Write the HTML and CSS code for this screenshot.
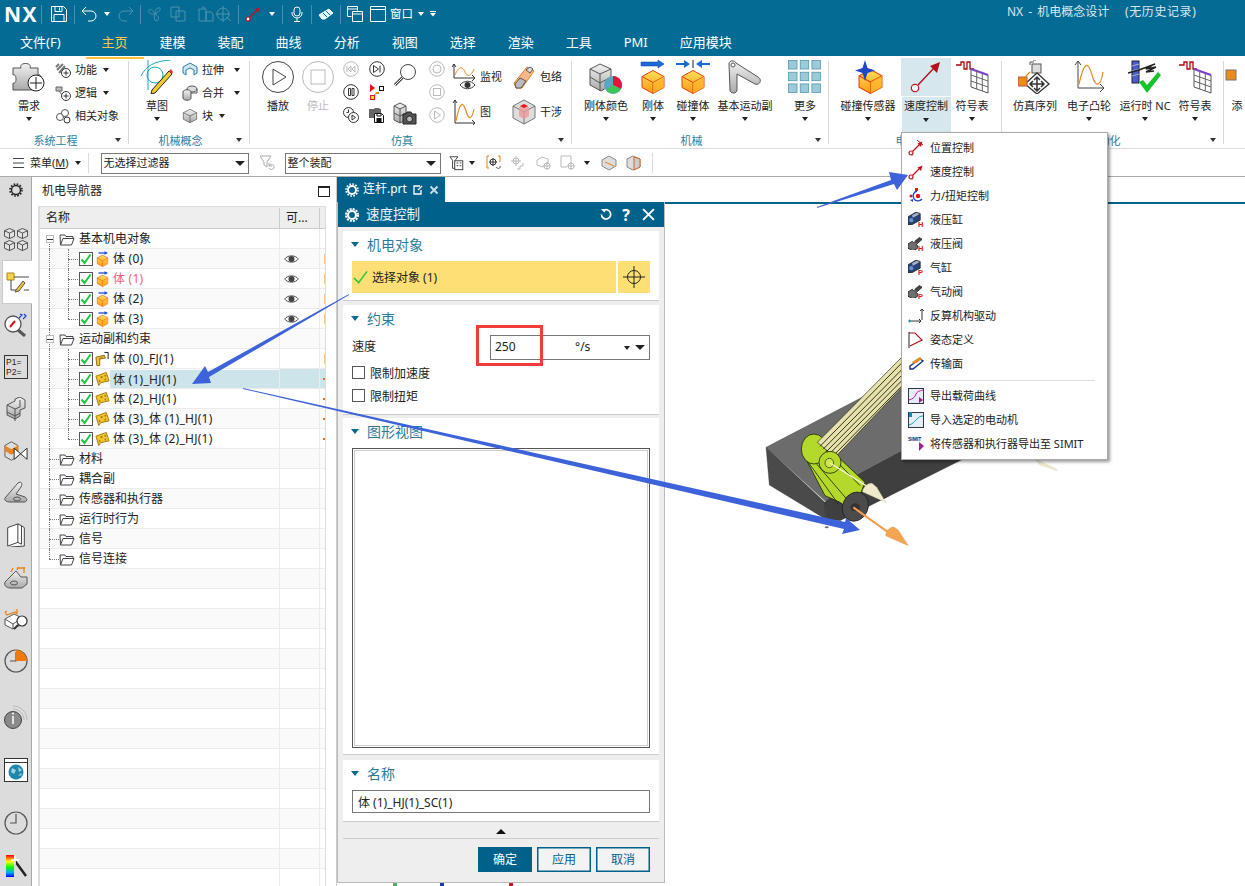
FILE: index.html
```html
<!DOCTYPE html>
<html lang="zh-CN">
<head>
<meta charset="utf-8">
<title>NX - 机电概念设计</title>
<link rel="stylesheet" href="styles.css">
</head>
<body>
<svg class="defs" width="0" height="0" aria-hidden="true">
  <defs>
    <linearGradient id="gOr" x1="0" y1="0" x2="0" y2="1"><stop offset="0" stop-color="#ffe05a"/><stop offset="1" stop-color="#ff9a12"/></linearGradient>
    <linearGradient id="gGr" x1="0" y1="0" x2="0" y2="1"><stop offset="0" stop-color="#f2f2f2"/><stop offset="1" stop-color="#a9a9a9"/></linearGradient>
    <linearGradient id="gBar" x1="0" y1="0" x2="0" y2="1"><stop offset="0" stop-color="#f00"/><stop offset=".3" stop-color="#ff0"/><stop offset=".55" stop-color="#0f0"/><stop offset=".8" stop-color="#0af"/><stop offset="1" stop-color="#00f"/></linearGradient>
    <symbol id="cube" viewBox="0 0 24 24"><path d="M12 1 23 7v11l-11 6L1 18V7z" fill="url(#gOr)" stroke="#e8400c"/><path d="M1 7l11 6 11-6M12 13v11" fill="none" stroke="#e8400c"/><path d="M12 13l11-6v11l-11 6z" fill="#ffb52c" opacity=".7"/></symbol>
    <symbol id="gcube" viewBox="0 0 24 24"><path d="M12 2 22 7v10l-10 5L2 17V7z" fill="url(#gGr)" stroke="#555"/><path d="M2 7l10 5 10-5M12 12v10" fill="none" stroke="#555"/></symbol>
    <symbol id="gcube2" viewBox="0 0 12 12"><path d="M6 .5 11.500 3v6L6 11.500.5 9V3z" fill="#e4e4e4" stroke="#444"/><path d="M.5 3 6 5.500 11.500 3M6 5.500v6" fill="none" stroke="#444"/></symbol>
    <symbol id="folder" viewBox="0 0 16 14"><path d="M1 3h5l1 1.500h7v2M1.500 13 1 3M1.500 13h11L15 6.500H4L1.500 13z" fill="#fff" stroke="#444"/></symbol>
    <symbol id="check" viewBox="0 0 14 14"><rect x=".5" y=".5" width="13" height="13" fill="#fff" stroke="#555"/><path d="M2.500 7.500 5.500 11l6-8.500" fill="none" stroke="#1fc93e" stroke-width="2"/></symbol>
    <symbol id="eye" viewBox="0 0 16 10"><path d="M.7 5C4 .5 12 .5 15.300 5 12 9.500 4 9.500.7 5z" fill="#fff" stroke="#444"/><circle cx="8" cy="5" r="3.200" fill="#444"/></symbol>
    <symbol id="bodyico" viewBox="0 0 14 16"><use href="#cube" x="1" y="3" width="12" height="13"/><path d="M3 2h8" stroke="#1c4fd0" stroke-width="1.300"/><path d="M9 .2 12.500 2 9 3.800z" fill="#1c4fd0"/></symbol>
    <symbol id="hinge" viewBox="0 0 16 16"><path d="M1 5 12 1l3 9-9 2-2 3z" fill="#f1c52e" stroke="#a87908"/><circle cx="7" cy="6" r="1.200" fill="#a87908"/><circle cx="11" cy="4.500" r="1" fill="#a87908"/><circle cx="11" cy="8.500" r="1" fill="#a87908"/><circle cx="5" cy="10" r="1" fill="#a87908"/></symbol>
    <symbol id="fixj" viewBox="0 0 16 16"><path d="M1 6 10 4l1 3-6 1v7H2z" fill="#f1c52e" stroke="#8a6a14"/><path d="M4 8 9 5" stroke="#d96b25"/><path d="M10 1h4v4M14 5v3" fill="none" stroke="#111"/></symbol>
    <symbol id="ctl" viewBox="0 0 16 16"><circle cx="3" cy="13" r="2" fill="#fff" stroke="#c8101c" stroke-width="1.200"/><path d="M4.500 11.500 12 4" stroke="#c8101c" stroke-width="1.200"/><path d="M14.500 1.500 13 7 9.500 3.500z" fill="#c8101c"/></symbol>
    <symbol id="symtab" viewBox="0 0 34 34"><path d="M1 5h5V2h3v7h3V2h3v7h4" fill="none" stroke="#b0060c" stroke-width="1.300"/><path d="M16 9 33 15v18l-17-6z" fill="#fff" stroke="#555"/><path d="M16 9 33 15" stroke="#7d3fd0" stroke-width="2"/><path d="M21.700 11v18M27.300 13v18M16 15l17 6M16 21l17 6" stroke="#666"/></symbol>
    <symbol id="cyl" viewBox="0 0 16 16"><path d="M0 6 10 0l5 2v8L4 16H0z" fill="#27457a" stroke="#222"/><path d="M5 4 11 1l3 1.500-8 4.500z" fill="#aab6c8"/><circle cx="4" cy="10" r="2.500" fill="#6d8fd0"/></symbol>
    <symbol id="valve" viewBox="0 0 16 16"><path d="M0 9 5 6l2 2 6-5 3 1-7 6 2 1v3l-5 3-6-3z" fill="#6e6e6e" stroke="#222"/><path d="M7 6l6-5 3 2-6 5z" fill="#444"/></symbol>
    <symbol id="clockc" viewBox="0 0 24 24"><circle cx="12" cy="12" r="11" fill="none" stroke="#555" stroke-width="1.200"/><path d="M12 3v9h-6" fill="none" stroke="#555" stroke-width="1.200"/></symbol>
  </defs>
</svg>

<header class="titlebar">
  <div class="qat">
    <span class="logo">NX</span>
    <i class="qsep first"></i>
    <svg class="qi" viewBox="0 0 16 16"><path d="M.5.500h12l3 3v12H.5zM4 .5v5h7v-5M3 15.500v-7h10v7" fill="none" stroke="#fff"/><path d="M8.500 1.500v3" stroke="#fff"/></svg>
    <i class="qsep s1l"></i>
    <svg class="qi" viewBox="0 0 16 16"><path d="M5 1 1 5l4 4M1 5h9a5 5 0 0 1 0 10H7" fill="none" stroke="#fff"/></svg>
    <i class="caret wh ml7"></i>
    <svg class="qi dim ml8" viewBox="0 0 16 16"><path d="M11 1l4 4-4 4M15 5H6a5 5 0 0 0 0 10h3" fill="none" stroke="#4f93ad"/></svg>
    <i class="qsep"></i>
    <svg class="qi" viewBox="0 0 16 16"><path d="M8 8C4 1 1 3 2 6s4 2 6 2zm0 0c7-4 6-7 3-6S8 6 8 8zm0 0c-2 6 1 8 3 6s-1-5-3-6z" fill="none" stroke="#4f93ad"/></svg>
    <svg class="qi ml7" viewBox="0 0 16 16"><path d="M1 1h8l0 10H1zM6 5h9v10H6z" fill="none" stroke="#4f93ad"/></svg>
    <svg class="qi ml12" viewBox="0 0 16 16"><path d="M1 3h7v12H1zM4 1h2v2M8 6h5l2 2v7H8z" fill="none" stroke="#4f93ad"/></svg>
    <svg class="qi ml2" viewBox="0 0 16 16"><circle cx="7" cy="8" r="6" fill="none" stroke="#4f93ad"/><path d="M7 0v16M0 8h14M10 11l5 4" stroke="#4f93ad" fill="none"/></svg>
    <i class="qsep"></i>
    <svg class="qi" viewBox="0 0 16 16"><use href="#ctl"/></svg>
    <i class="caret wh ml8 mr1"></i>
    <i class="qsep"></i>
    <svg class="qi" viewBox="0 0 16 16"><rect x="5" y="1" width="6" height="9" rx="3" fill="none" stroke="#fff"/><path d="M3 6v1a5 5 0 0 0 10 0V6M8 12v3M5 15.500h6" fill="none" stroke="#fff"/></svg>
    <i class="qsep"></i>
    <svg class="qi" viewBox="0 0 16 16"><path d="M1 9 11 3l4 4-8 6H4z" fill="#dff" stroke="#fff"/><path d="M5 7l4 4M8 5l4 4" stroke="#046b94"/></svg>
    <i class="qsep"></i>
    <svg class="qi" viewBox="0 0 16 16"><path d="M.5.500h10v4M.5.500v10h4M.5 3h10M5.500 5.500h10v10h-10zM5.500 8h10" fill="none" stroke="#fff"/></svg>
    <svg class="qi ml7" viewBox="0 0 16 16"><path d="M.5.500h15v15H.5zM.5 3.500h15" fill="none" stroke="#fff"/></svg>
    <span class="wintxt">窗口</span>
    <i class="caret wh ml5"></i>
    <svg class="qend" viewBox="0 0 8 6"><path d="M1 .5h6" stroke="#fff"/><path d="M1 2h6L4 5.500z" fill="#fff"/></svg>
    <div class="apptitle"><span class="at-a">NX - 机电概念设计</span><span class="at-b">(无历史记录)</span></div>
  </div>
  <nav class="tabs">
    <span class="tab first">文件(F)</span>
    <span class="tab active">主页</span>
    <span class="tab">建模</span>
    <span class="tab">装配</span>
    <span class="tab">曲线</span>
    <span class="tab">分析</span>
    <span class="tab">视图</span>
    <span class="tab">选择</span>
    <span class="tab">渲染</span>
    <span class="tab">工具</span>
    <span class="tab">PMI</span>
    <span class="tab">应用模块</span>
  </nav>
</header>

<section class="ribbon">
  <div class="group g-sys">
    <div class="grow">
      <div class="big w-need">
        <svg class="bigi" viewBox="0 0 34 34"><path d="M1 8h8c-3-6 12-6 9 0h8v7c5-2 5 12 0 11v4H1v-7c4 2 4-10 0-8z" fill="url(#gGr)" stroke="#555"/><circle cx="24" cy="23" r="8" fill="#fff" stroke="#222"/><path d="M24 17v12M18 23h12" stroke="#222"/></svg>
        <span class="blabel">需求</span><i class="caret"></i>
      </div>
      <div class="smalls">
        <div class="sm"><svg viewBox="0 0 16 16"><path d="M2 8 8 2M1 5l3-3M4 11l6-7" stroke="#777" stroke-width="2"/><circle cx="11" cy="11" r="4.500" fill="#fff" stroke="#333"/><path d="M11 8.500v5M8.500 11h5" stroke="#333"/></svg><span>功能</span><i class="caret"></i></div>
        <div class="sm"><svg viewBox="0 0 16 16"><path d="M1 2h6v4H1zM4 6l3 4" fill="#bbb" stroke="#666"/><circle cx="11" cy="11" r="4.500" fill="#fff" stroke="#333"/><path d="M11 8.500v5M8.500 11h5" stroke="#333"/></svg><span>逻辑</span><i class="caret"></i></div>
        <div class="sm"><svg viewBox="0 0 16 16"><circle cx="5" cy="9" r="3.500" fill="#fff" stroke="#555"/><circle cx="10" cy="5" r="3.500" fill="#fff" stroke="#555"/><circle cx="12" cy="12" r="3" fill="#fff" stroke="#333"/></svg><span>相关对象</span></div>
      </div>
    </div>
    <div class="glabel">系统工程<i class="caret gc"></i></div>
  </div>

  <div class="group g-mc">
    <div class="grow">
      <div class="big w-sk">
        <svg class="bigi" viewBox="0 0 34 34"><path d="M1 16C6 6 14 1 31 0M8 0v30" fill="none" stroke="#1aa7bd"/><circle cx="15" cy="15" r="8" fill="none" stroke="#1aa7bd"/><path d="M12 30l-1 4 4-1L32 14l-3-3z" fill="#f3cb35" stroke="#222"/><path d="M29 11l3 3 1-2-2-3z" fill="#e33"/></svg>
        <span class="blabel">草图</span><i class="caret"></i>
      </div>
      <div class="smalls">
        <div class="sm"><svg viewBox="0 0 16 16"><path d="M1 5l7-4 7 4v6l-3 2V8L8 6 4 8v5l-3-2z" fill="#cfe6f2" stroke="#2a7fa8"/></svg><span>拉伸</span><i class="caret far"></i></div>
        <div class="sm"><svg viewBox="0 0 16 16"><ellipse cx="10" cy="4" rx="5" ry="3" fill="#ddd" stroke="#555"/><path d="M1 7c0-3 8-3 8 0v6c0 3-8 3-8 0z" fill="url(#gGr)" stroke="#555"/><path d="M9 8h6V4" fill="none" stroke="#555"/></svg><span>合并</span><i class="caret far"></i></div>
        <div class="sm"><svg viewBox="0 0 16 16"><use href="#gcube"/></svg><span>块</span><i class="caret"></i></div>
      </div>
    </div>
    <div class="glabel">机械概念<i class="caret gc"></i></div>
  </div>

  <div class="group g-sim">
    <div class="grow">
      <div class="big w-play">
        <svg class="bigi" viewBox="0 0 34 34"><circle cx="17" cy="17" r="15.500" fill="#fff" stroke="#444"/><path d="M12 9l13 8-13 8z" fill="#fff" stroke="#444"/></svg>
        <span class="blabel">播放</span>
      </div>
      <div class="big w-stop off">
        <svg class="bigi" viewBox="0 0 34 34"><circle cx="17" cy="17" r="15.500" fill="#fff" stroke="#bbb"/><rect x="10" y="10" width="14" height="14" fill="#fff" stroke="#bbb"/></svg>
        <span class="blabel">停止</span>
      </div>
      <div class="icol c1">
        <svg viewBox="0 0 16 16"><circle cx="8" cy="8" r="7.300" fill="#fff" stroke="#bbb"/><path d="M4 5v6M8 5 5 8l3 3zM12 5 9 8l3 3z" fill="none" stroke="#bbb"/></svg>
        <svg viewBox="0 0 16 16"><circle cx="8" cy="8" r="7.300" fill="#fff" stroke="#333"/><path d="M5.500 4.500v7h2v-7zM9 4.500v7h2v-7z" fill="#fff" stroke="#333"/></svg>
        <svg viewBox="0 0 16 16"><circle cx="5.500" cy="5.500" r="5" fill="#fff" stroke="#333"/><path d="M5.500 2.500v3h-2" fill="none" stroke="#333"/><circle cx="10.500" cy="10.500" r="5" fill="#fff" stroke="#333"/><path d="M9 8l3.500 2.500L9 13z" fill="none" stroke="#333"/></svg>
      </div>
      <div class="icol c2">
        <svg viewBox="0 0 16 16"><circle cx="8" cy="8" r="7.300" fill="#fff" stroke="#333"/><path d="M4.500 4.500l5 3.500-5 3.500zM11 4.500v7" fill="none" stroke="#333"/></svg>
        <svg viewBox="0 0 16 16"><path d="M1 0l5 4-5 4z" fill="#e8131c"/><rect x="10.500" y="2.500" width="4" height="4" fill="#fff" stroke="#111"/><rect x="1.500" y="11.500" width="4" height="4" fill="#ffe600" stroke="#e8131c"/><path d="M5 11l3-2 2-1" stroke="#e88a1a"/><rect x="7" y="8" width="3" height="2" fill="#e88a1a"/></svg>
        <svg viewBox="0 0 16 16"><path d="M0 2h5l1-1h4l1 1h1v4H5v5H0z" fill="#666"/><path d="M5.500 6.500h7l2 2v7h-9z" fill="#fff" stroke="#111"/><rect x="7.500" y="11" width="5" height="4.500" fill="#111"/><path d="M8 6.500v2.500h4V6.500" stroke="#111" fill="none"/></svg>
      </div>
      <div class="icol mag">
        <svg class="lg" viewBox="0 0 24 24"><circle cx="15" cy="9" r="7.500" fill="#fff" stroke="#444"/><path d="M9.500 14.500 2 22" stroke="#444" stroke-width="3"/><path d="M9.500 14.500 2 22" stroke="#fff"/></svg>
        <svg class="lg" viewBox="0 0 24 24"><path d="M1 5l6-3 6 3v14l-6 3-6-3z" fill="url(#gGr)" stroke="#555"/><path d="M1 12l6 3 6-3M7 8v14M1 5l6 3 6-3" fill="none" stroke="#555"/><path d="M10 13h3l1-2h4l1 2h4v10H10z" fill="#555" stroke="#222"/><circle cx="16.500" cy="18" r="3" fill="#bbb" stroke="#222"/></svg>
      </div>
      <div class="icol c3">
        <svg viewBox="0 0 16 16"><circle cx="8" cy="8" r="7.300" fill="#fff" stroke="#bbb"/><circle cx="8" cy="8" r="4" fill="none" stroke="#bbb"/></svg>
        <svg viewBox="0 0 16 16"><circle cx="8" cy="8" r="7.300" fill="#fff" stroke="#bbb"/><rect x="4.500" y="4.500" width="7" height="7" fill="none" stroke="#bbb"/></svg>
        <svg viewBox="0 0 16 16"><circle cx="8" cy="8" r="7.300" fill="#fff" stroke="#bbb"/><path d="M5.500 4l6 4-6 4z" fill="none" stroke="#bbb"/></svg>
      </div>
      <div class="pairs">
        <div class="pair"><svg viewBox="0 0 24 26"><path d="M2 0v14h21M0 3l2-3 2 3M20 11l3 3-3 3" fill="none" stroke="#333"/><path d="M3 11C7 1 11 3 13 8s6 5 9-3" fill="none" stroke="#e88a2a"/><path d="M8 21c4-5 11-5 15 0-4 5-11 5-15 0z" fill="#fff" stroke="#333"/><circle cx="15.500" cy="21" r="3" fill="#333"/></svg><span>监视</span></div>
        <div class="pair"><svg viewBox="0 0 24 26"><path d="M3 1v23h20M1 4l2-3 2 3M20 21l3 3-3 3" fill="none" stroke="#333"/><path d="M4 22C8 2 11 2 14 12s6 8 8-2" fill="none" stroke="#e88a2a" stroke-width="1.200"/></svg><span>图</span></div>
      </div>
      <div class="pairs p2">
        <div class="pair"><svg viewBox="0 0 24 26"><path d="M2 19 15 3l7 4-12 17-6 0z" fill="#f7b98a" stroke="#e57f26"/><path d="M3 20l5-6 6 3-5 7H4z" fill="#bbb" stroke="#555"/><path d="M14 6l4-3 3 2-3 4z" fill="#ddd" stroke="#555"/></svg><span>包络</span></div>
        <div class="pair"><svg viewBox="0 0 24 26"><path d="M12 1 23 7v12l-11 6L1 19V7z" fill="#ddd" stroke="#777"/><path d="M1 7l11 6 11-6M12 13v12" fill="none" stroke="#777"/><path d="M7 8l5-2 5 2v9l-5 3-5-3z" fill="#e99" opacity=".8"/><path d="M8 7l4-2 4 2-4 2z" fill="#e8131c"/></svg><span>干涉</span></div>
      </div>
    </div>
    <div class="glabel">仿真<i class="caret gc"></i></div>
  </div>

  <div class="group g-mech">
    <div class="grow cols">
      <div class="big">
        <svg class="bigi" viewBox="0 0 34 34"><path d="M1 9 11 4l11 5v16l-10 6-11-6z" fill="url(#gGr)" stroke="#555"/><path d="M1 9l10 5 11-5M11 14v17M1 17l10 6 11-6" fill="none" stroke="#555"/><circle cx="24" cy="25" r="9" fill="#5aa7c4"/><path d="M24 25V16a9 9 0 0 1 8 13z" fill="#e8133c"/><path d="M24 25l8 4a9 9 0 0 1-15 1z" fill="#3ec454"/></svg>
        <span class="blabel">刚体颜色</span><i class="caret"></i>
      </div>
      <div class="big">
        <svg class="bigi" viewBox="0 0 34 34"><path d="M5 2h17v-2l6 4-6 4V6H5z" fill="#1c6ad8" stroke="#123a9a" stroke-width=".5"/><use href="#cube" x="5" y="9" width="24" height="25"/></svg>
        <span class="blabel">刚体</span><i class="caret"></i>
      </div>
      <div class="big">
        <svg class="bigi" viewBox="0 0 34 34"><path d="M0 3h8V0l6 4-6 4V5H0zM34 3h-8V0l-6 4 6 4V5h8z" fill="#1c6ad8"/><path d="M17 0v8" stroke="#123"/><use href="#cube" x="5" y="9" width="24" height="25"/></svg>
        <span class="blabel">碰撞体</span><i class="caret"></i>
      </div>
      <div class="big">
        <svg class="bigi" viewBox="0 0 34 34"><path d="M1 4c0-4 6-4 7-1l22 14c5 3 1 9-3 7L9 14v16c0 4-7 4-7 0z" fill="url(#gGr)" stroke="#555"/><circle cx="5" cy="5" r="2" fill="#fff" stroke="#555"/></svg>
        <span class="blabel">基本运动副</span><i class="caret"></i>
      </div>
      <div class="big more">
        <svg class="bigi" viewBox="0 0 32 32"><g fill="#9ccad8" stroke="#4d93ad" stroke-width=".7"><rect x=".5" y=".5" width="8" height="8"/><rect x="11.500" y=".5" width="8" height="8"/><rect x="22.500" y=".5" width="8" height="8"/><rect x=".5" y="11.500" width="8" height="8"/><rect x="11.500" y="11.500" width="8" height="8"/><rect x="22.500" y="11.500" width="8" height="8"/><rect x=".5" y="22.500" width="8" height="8"/><rect x="11.500" y="22.500" width="8" height="8"/><rect x="22.500" y="22.500" width="8" height="8"/></g></svg>
        <span class="blabel">更多</span><i class="caret"></i>
      </div>
    </div>
    <div class="glabel">机械<i class="caret gc"></i></div>
  </div>

  <div class="group g-elec">
    <div class="grow cols">
      <div class="big sensor">
        <svg class="bigi" viewBox="0 0 34 34"><use href="#cube" x="7" y="8" width="25" height="26"/><path d="M14 0l2.500 8L24 10.500l-7.500 2.500L14 21l-2.500-8L4 10.500 11.500 8z" fill="#1f46c8"/></svg>
        <span class="blabel">碰撞传感器</span><i class="caret"></i>
      </div>
      <div class="big hot">
        <span class="hot-ic"><svg class="bigi" viewBox="0 0 34 34"><circle cx="6" cy="28" r="3.700" fill="#fff" stroke="#c8101c" stroke-width="1.200"/><path d="M9 25 25 8" stroke="#a81118" stroke-width="1.400"/><path d="M31 2l-3 11-7-7z" fill="#b4121a"/></svg></span>
        <span class="hot-lb"><span class="blabel">速度控制</span><i class="caret"></i></span>
      </div>
      <div class="big">
        <svg class="bigi" viewBox="0 0 34 34"><use href="#symtab"/></svg>
        <span class="blabel">符号表</span><i class="caret"></i>
      </div>
    </div>
    <div class="glabel">电气</div>
  </div>

  <div class="group g-auto">
    <div class="grow cols">
      <div class="big">
        <svg class="bigi" viewBox="0 0 34 34"><path d="M16 2h-4v3M18 0h-3" fill="none" stroke="#555"/><rect x="14" y="4" width="9" height="9" fill="#ddd" stroke="#555"/><path d="M19 13l12 11-12 10L7 24z" fill="#fff" stroke="#333" stroke-width="1.300"/><path d="M19 17v14M12 24h14M16 20l3-3 3 3M16 28l3 3 3-3M15 21l-3 3 3 3M23 21l3 3-3 3" fill="none" stroke="#333" stroke-width="1.500"/><rect x="0" y="17" width="9" height="9" fill="#ec8a1a" stroke="#b55"/><path d="M7 17l5-5" stroke="#ec8a1a" stroke-width="1.300"/></svg>
        <span class="blabel">仿真序列</span>
      </div>
      <div class="big">
        <svg class="bigi" viewBox="0 0 32 34"><path d="M5 1v27h26M2 5l3-4 3 4M27 24l4 4-4 4" fill="none" stroke="#444"/><path d="M6 24c5-22 9-24 13-9s9 10 11-3" fill="none" stroke="#e88a2a" stroke-width="1.200"/></svg>
        <span class="blabel">电子凸轮</span><i class="caret"></i>
      </div>
      <div class="big">
        <svg class="bigi" viewBox="0 0 34 34"><rect x="4" y="1" width="7" height="22" fill="#4c5ecb" stroke="#223"/><path d="M4 6l7-2M4 11l7-2M4 16l7-2" stroke="#aac"/><path d="M0 13l11-3 16-6-9 5 10-2-10 5 8-1" fill="none" stroke="#222" stroke-width="1.400"/><path d="M11 22l4-2 4 5L30 12l3 3-14 18z" fill="#14c42a"/></svg>
        <span class="blabel">运行时 NC</span><i class="caret"></i>
      </div>
      <div class="big">
        <svg class="bigi" viewBox="0 0 34 34"><use href="#symtab"/></svg>
        <span class="blabel">符号表</span><i class="caret"></i>
      </div>
    </div>
    <div class="glabel">自动化<i class="caret gc"></i></div>
  </div>

  <div class="group g-end">
    <div class="grow cols">
      <div class="big">
        <svg class="bigi" viewBox="0 0 34 34"><rect x="6" y="10" width="10" height="10" fill="#ec8a1a" stroke="#777"/></svg>
        <span class="blabel">添</span>
      </div>
    </div>
  </div>
</section>

<section class="toolbar">
  <svg class="menuic" viewBox="0 0 11 10"><path d="M0 .5h11M0 5h11M0 9.500h11" stroke="#444"/></svg>
  <span class="menulb">菜单(<u>M</u>)</span><i class="caret tcar"></i>
  <i class="tsep"></i>
  <div class="combo c-a"><span>无选择过滤器</span><i class="caret blk"></i></div>
  <svg class="ti fl" viewBox="0 0 16 16"><path d="M1 1h11L8 7v5L5 10V7z" fill="none" stroke="#aaa"/><path d="M10 13c1 2 5 2 5-1s-3-3-5-2M10 8v3h3" fill="none" stroke="#aaa"/></svg>
  <div class="combo c-b"><span>整个装配</span><i class="caret blk"></i></div>
  <svg class="ti t1" viewBox="0 0 18 16"><path d="M1 1h9L7 5v9H4V5z" fill="none" stroke="#333"/><rect x="6.500" y="5.500" width="9" height="10" fill="#fff" stroke="#333"/><path d="M8.500 8h2M12 8h2M8.500 11h2M12 11h2" stroke="#333"/></svg>
  <i class="caret tc1"></i>
  <svg class="ti t2" viewBox="0 0 16 16"><path d="M3 1H1v12h2M12 1h2v6" fill="none" stroke="#e8800e"/><circle cx="7" cy="7" r="3" fill="none" stroke="#333"/><path d="M7 3v8M3 7h8" stroke="#333"/><path d="M10 12c1 2 5 2 4-1" fill="none" stroke="#555"/></svg>
  <svg class="ti t3a" viewBox="0 0 16 16"><circle cx="6" cy="6" r="3" fill="none" stroke="#bbb"/><path d="M6 1v10M1 6h10M7 14h3v-3h3V8" fill="none" stroke="#bbb"/></svg>
  <svg class="ti t3b" viewBox="0 0 16 16"><path d="M1 5l5-3 6 2v5l-5 3-6-2z" fill="none" stroke="#bbb"/><circle cx="11" cy="11" r="3" fill="#fff" stroke="#bbb"/><path d="M11 7v8M7 11h8" stroke="#bbb"/></svg>
  <svg class="ti t3a" viewBox="0 0 16 16"><path d="M1 1h10v8M1 1v11h6" fill="none" stroke="#bbb"/><circle cx="11" cy="11" r="3" fill="#fff" stroke="#bbb"/><path d="M11 7v8M7 11h8" stroke="#bbb"/></svg>
  <i class="caret tc2"></i>
  <svg class="ti t4" viewBox="0 0 16 16"><path d="M8 1l7 4v6l-7 4-7-4V5z" fill="#ddd" stroke="#888"/><path d="M4 7l9 4" stroke="#e8800e"/></svg>
  <svg class="ti t5" viewBox="0 0 16 16"><path d="M7 1l7 3v8l-7 3-6-3V4z" fill="#ddd" stroke="#888"/><path d="M8 2l6 2v8l-6 3z" fill="#ccc" stroke="#d8641c"/></svg>
  <i class="tsep last"></i>
</section>

<main class="main">
  <aside class="side">
    <div class="si gear"><svg viewBox="0 0 14 14"><circle cx="7" cy="7" r="4.500" fill="none" stroke="#222" stroke-width="1.400"/><circle cx="7" cy="7" r="6" fill="none" stroke="#222" stroke-dasharray="1.600 1.540" stroke-width="1.600"/></svg></div>
    <div class="si first"><svg viewBox="0 0 24 24"><use href="#gcube2" x="0" y="1" width="11" height="11"/><use href="#gcube2" x="13" y="1" width="11" height="11"/><use href="#gcube2" x="0" y="13" width="11" height="11"/><use href="#gcube2" x="13" y="13" width="11" height="11"/></svg></div>
    <div class="si on"><svg viewBox="0 0 24 22"><path d="M1 2h7v7H1z" fill="#f4d54a" stroke="#a7861a"/><path d="M5 9v10h5M8 6h15M18 19h5" fill="none" stroke="#445" /><path d="M10 19 17 10l2 2-6 8-4 1z" fill="#f1c52e" stroke="#555"/></svg></div>
    <div class="si"><svg viewBox="0 0 24 24"><circle cx="9" cy="11" r="8" fill="#fff" stroke="#555" stroke-width="1.300"/><path d="M6 14l5-6" stroke="#d8141c" stroke-width="2"/><path d="M14 17l7 6" stroke="#555" stroke-width="3"/><path d="M15 5l3-3-2-1M19 6l3-3-2-2" fill="none" stroke="#2345c8" stroke-width="1.300"/></svg></div>
    <div class="si"><svg viewBox="0 0 24 24"><rect x=".5" y=".5" width="23" height="23" fill="none" stroke="#333"/><text class="p12" x="2" y="10">P1=</text><text class="p12" x="2" y="20">P2=</text></svg></div>
    <div class="si"><svg viewBox="0 0 20 24"><path d="M1 8 9 4v-2l5-2 5 3v8l-5 2v6l-5 3-8-4z" fill="url(#gGr)" stroke="#555"/><path d="M1 8l8 4 5-2M9 12v12M1 15l8 4 5-3M14 3v7" fill="none" stroke="#555"/></svg></div>
    <div class="si"><svg viewBox="0 0 26 24"><path d="M1 6l7-4 7 4v12l-7 4-7-4z" fill="#ddd" stroke="#555"/><path d="M1 6l7 4 7-4v6l-7 4-7-4z" fill="#ee8420"/><path d="M11 9l14 12V9L11 21z" fill="#fff" stroke="#222"/></svg></div>
    <div class="si"><svg viewBox="0 0 24 24"><path d="M1 17 14 2c3-2 5 0 3 4l-5 7 9 3c3 2 2 5-1 5H6c-4 0-6-2-5-4z" fill="url(#gGr)" stroke="#555"/><ellipse cx="13" cy="18" rx="3.500" ry="2" fill="none" stroke="#555"/></svg></div>
    <div class="si"><svg viewBox="0 0 20 26"><path d="M1 5l11-4 0 20-11 4zM12 1l4 2v20l-4-2M16 3l3 2v20l-15 1" fill="#fff" stroke="#333"/></svg></div>
    <div class="si"><svg viewBox="0 0 24 24"><path d="M1 17 12 6l5 6 6 0v7l-5 4H6c-4 0-6-3-5-6z" fill="url(#gGr)" stroke="#555"/><ellipse cx="10" cy="18" rx="3.500" ry="2" fill="none" stroke="#555"/><path d="M7 7l2-4M14 3h7M20 2v6M14 2l-1 3" fill="none" stroke="#ec8115" stroke-width="1.300"/></svg></div>
    <div class="si"><svg viewBox="0 0 24 24"><path d="M1 12l9-5 8 4v6l-9 5-8-4z" fill="#fff" stroke="#555"/><path d="M1 12l8 5 9-6M9 17v5" fill="none" stroke="#555"/><path d="M1 5l2 3 8-3 2 2M1 5l2-1M13 2l0 5" fill="none" stroke="#ec8115" stroke-width="1.300"/><circle cx="18" cy="14" r="5" fill="#fff" stroke="#333" stroke-width="1.200"/><path d="M14 18l-4 4" stroke="#333" stroke-width="2"/></svg></div>
    <div class="si"><svg viewBox="0 0 24 24"><use href="#clockc"/><path d="M12 12V1a11 11 0 0 1 11 11z" fill="#ec7a0c"/></svg></div>
    <div class="si g14"><svg viewBox="0 0 24 24"><circle cx="9" cy="15" r="8.500" fill="#8a8a8a" stroke="#444"/><path d="M9 11v8" stroke="#fff" stroke-width="1.500"/><circle cx="9" cy="8.500" r="1" fill="#fff"/><path d="M9 1c8 0 14 6 14 14M9 4c6 0 11 5 11 11" fill="none" stroke="#bbb"/></svg></div>
    <div class="si g11"><svg viewBox="0 0 24 24"><rect x=".5" y=".5" width="23" height="23" fill="#fff" stroke="#333"/><path d="M.5 4.500h23" stroke="#333"/><circle cx="12" cy="14" r="7.500" fill="#1f87ab"/><path d="M8 10l4 2-2 4-3-2zM14 9l4 3-3 2zM14 18l3-3 1 2z" fill="#9fd3e2"/></svg></div>
    <div class="si g11"><svg viewBox="0 0 24 24"><use href="#clockc"/></svg></div>
    <div class="si g1"><svg viewBox="0 0 24 24"><rect x="2" y="1" width="8" height="22" fill="url(#gBar)"/><path d="M11 7l11 15" stroke="#222" stroke-width="2.500"/><path d="M11 2v8M7 6h8" stroke="#fff" stroke-width="1.500"/></svg></div>
  </aside>

  <section class="nav">
    <div class="navhead"><span>机电导航器</span><i class="maxbox"></i></div>
    <div class="table">
      <div class="thead"><span class="c-name">名称</span><span class="c-vis">可...</span><span class="c-end"></span></div>
      <div class="tr"><div class="c-name l1"><i class="vl v1 half-d"></i><i class="exp"></i><svg class="fold"><use href="#folder"/></svg><span>基本机电对象</span></div><div class="c-vis"></div><div class="c-end"></div></div>
      <div class="tr"><div class="c-name l2"><i class="vl v1"></i><i class="vl v2"></i><i class="hl"></i><svg class="chk"><use href="#check"/></svg><svg class="obj"><use href="#bodyico"/></svg><span>体 (0)</span></div><div class="c-vis"><svg class="eye"><use href="#eye"/></svg></div><div class="c-end"><i class="tick"></i></div></div>
      <div class="tr"><div class="c-name l2"><i class="vl v1"></i><i class="vl v2"></i><i class="hl"></i><svg class="chk"><use href="#check"/></svg><svg class="obj"><use href="#bodyico"/></svg><span class="pink">体 (1)</span></div><div class="c-vis"><svg class="eye"><use href="#eye"/></svg></div><div class="c-end"><i class="tick"></i></div></div>
      <div class="tr"><div class="c-name l2"><i class="vl v1"></i><i class="vl v2"></i><i class="hl"></i><svg class="chk"><use href="#check"/></svg><svg class="obj"><use href="#bodyico"/></svg><span>体 (2)</span></div><div class="c-vis"><svg class="eye"><use href="#eye"/></svg></div><div class="c-end"><i class="tick"></i></div></div>
      <div class="tr"><div class="c-name l2"><i class="vl v1"></i><i class="vl v2 half-u"></i><i class="hl"></i><svg class="chk"><use href="#check"/></svg><svg class="obj"><use href="#bodyico"/></svg><span>体 (3)</span></div><div class="c-vis"><svg class="eye"><use href="#eye"/></svg></div><div class="c-end"><i class="tick"></i></div></div>
      <div class="tr"><div class="c-name l1"><i class="vl v1"></i><i class="exp"></i><svg class="fold"><use href="#folder"/></svg><span>运动副和约束</span></div><div class="c-vis"></div><div class="c-end"></div></div>
      <div class="tr"><div class="c-name l2"><i class="vl v1"></i><i class="vl v2"></i><i class="hl"></i><svg class="chk"><use href="#check"/></svg><svg class="obj"><use href="#fixj"/></svg><span>体 (0)_FJ(1)</span></div><div class="c-vis"></div><div class="c-end"><i class="tick"></i></div></div>
      <div class="tr sel"><div class="c-name l2"><i class="vl v1"></i><i class="vl v2"></i><i class="hl"></i><svg class="chk"><use href="#check"/></svg><svg class="obj"><use href="#hinge"/></svg><span class="hlite">体 (1)_HJ(1)</span></div><div class="c-vis"></div><div class="c-end"><i class="dot"></i></div></div>
      <div class="tr"><div class="c-name l2"><i class="vl v1"></i><i class="vl v2"></i><i class="hl"></i><svg class="chk"><use href="#check"/></svg><svg class="obj"><use href="#hinge"/></svg><span>体 (2)_HJ(1)</span></div><div class="c-vis"></div><div class="c-end"><i class="dot"></i></div></div>
      <div class="tr"><div class="c-name l2"><i class="vl v1"></i><i class="vl v2"></i><i class="hl"></i><svg class="chk"><use href="#check"/></svg><svg class="obj"><use href="#hinge"/></svg><span>体 (3)_体 (1)_HJ(1)</span></div><div class="c-vis"></div><div class="c-end"><i class="dot"></i></div></div>
      <div class="tr"><div class="c-name l2"><i class="vl v1"></i><i class="vl v2 half-u"></i><i class="hl"></i><svg class="chk"><use href="#check"/></svg><svg class="obj"><use href="#hinge"/></svg><span>体 (3)_体 (2)_HJ(1)</span></div><div class="c-vis"></div><div class="c-end"><i class="dot"></i></div></div>
      <div class="tr"><div class="c-name l1 noexp"><i class="vl v1"></i><i class="hl0"></i><svg class="fold"><use href="#folder"/></svg><span>材料</span></div><div class="c-vis"></div><div class="c-end"></div></div>
      <div class="tr"><div class="c-name l1 noexp"><i class="vl v1"></i><i class="hl0"></i><svg class="fold"><use href="#folder"/></svg><span>耦合副</span></div><div class="c-vis"></div><div class="c-end"></div></div>
      <div class="tr"><div class="c-name l1 noexp"><i class="vl v1"></i><i class="hl0"></i><svg class="fold"><use href="#folder"/></svg><span>传感器和执行器</span></div><div class="c-vis"></div><div class="c-end"></div></div>
      <div class="tr"><div class="c-name l1 noexp"><i class="vl v1"></i><i class="hl0"></i><svg class="fold"><use href="#folder"/></svg><span>运行时行为</span></div><div class="c-vis"></div><div class="c-end"></div></div>
      <div class="tr"><div class="c-name l1 noexp"><i class="vl v1"></i><i class="hl0"></i><svg class="fold"><use href="#folder"/></svg><span>信号</span></div><div class="c-vis"></div><div class="c-end"></div></div>
      <div class="tr"><div class="c-name l1 noexp"><i class="vl v1 half-u"></i><i class="hl0"></i><svg class="fold"><use href="#folder"/></svg><span>信号连接</span></div><div class="c-vis"></div><div class="c-end"></div></div>
      <div class="tr"><div class="c-name"></div><div class="c-vis"></div><div class="c-end"></div></div>
      <div class="tr"><div class="c-name"></div><div class="c-vis"></div><div class="c-end"></div></div>
      <div class="tr"><div class="c-name"></div><div class="c-vis"></div><div class="c-end"></div></div>
      <div class="tr"><div class="c-name"></div><div class="c-vis"></div><div class="c-end"></div></div>
      <div class="tr"><div class="c-name"></div><div class="c-vis"></div><div class="c-end"></div></div>
      <div class="tr"><div class="c-name"></div><div class="c-vis"></div><div class="c-end"></div></div>
      <div class="tr"><div class="c-name"></div><div class="c-vis"></div><div class="c-end"></div></div>
      <div class="tr"><div class="c-name"></div><div class="c-vis"></div><div class="c-end"></div></div>
      <div class="tr"><div class="c-name"></div><div class="c-vis"></div><div class="c-end"></div></div>
      <div class="tr"><div class="c-name"></div><div class="c-vis"></div><div class="c-end"></div></div>
      <div class="tr"><div class="c-name"></div><div class="c-vis"></div><div class="c-end"></div></div>
      <div class="tr"><div class="c-name"></div><div class="c-vis"></div><div class="c-end"></div></div>
      <div class="tr"><div class="c-name"></div><div class="c-vis"></div><div class="c-end"></div></div>
      <div class="tr"><div class="c-name"></div><div class="c-vis"></div><div class="c-end"></div></div>
      <div class="tr"><div class="c-name"></div><div class="c-vis"></div><div class="c-end"></div></div>
      <div class="tr"><div class="c-name"></div><div class="c-vis"></div><div class="c-end"></div></div>
      <div class="tr"><div class="c-name"></div><div class="c-vis"></div><div class="c-end"></div></div>
    </div>
  </section>

  <section class="work">
    <div class="doctabs">
      <div class="doctab">
        <svg class="dt-ic" viewBox="0 0 14 14"><circle cx="7" cy="7" r="4" fill="none" stroke="#fff" stroke-width="2"/><circle cx="7" cy="7" r="6" fill="none" stroke="#fff" stroke-dasharray="1.600 1.500" stroke-width="1.600"/></svg>
        <span>连杆.prt</span>
        <svg class="dt-x" viewBox="0 0 10 10"><path d="M7 1H1v8h7V5" fill="none" stroke="#fff" stroke-width="1.300"/><path d="M5 5l4-4" stroke="#fff" stroke-width="1.300"/></svg>
        <svg class="dt-x" viewBox="0 0 10 10"><path d="M1.500 1.500l7 7M8.500 1.500l-7 7" stroke="#cfe0e8" stroke-width="1.800"/></svg>
      </div>
    </div>
    <div class="canvas">
      <svg class="model" viewBox="0 0 1020 690">
        <path d="M78 325 385 165 740 0 900 200 430 480 260 490z" fill="#6c6c6c" stroke="#333"/>
        <path d="M78 325 255 490 256 540 88 438z" fill="#4a4a4a" stroke="#333"/>
        <path d="M255 490 345 412 760 190 680 355 300 545 256 540z" fill="#3f3f3f" stroke="#222"/>
        <ellipse cx="260" cy="565" rx="6" ry="3" fill="#333" opacity=".7"/>
        <path d="M885 360 945 388 953 395 900 378z" fill="#efeacb" stroke="#d0cca8"/>
        <path d="M190 345 240 305 285 345 375 430 340 520 300 490 255 470z" fill="#b5d92a" stroke="#1c2a05" stroke-width="2.500"/>
        <path d="M205 370 295 495M250 325 360 440M230 375 320 480" stroke="#1c2a05" stroke-width="2.500" fill="none"/>
        <ellipse cx="222" cy="330" rx="38" ry="45" fill="#b5d92a" stroke="#1c2a05" stroke-width="2.500"/>
        <path d="M232 310 490 50 510 120 285 355z" fill="#e7e2ad" stroke="#22220e" stroke-width="2"/>
        <path d="M240 322 492 65M250 330 497 80M260 337 502 92M270 343 506 104M280 350 510 116" stroke="#33331b" stroke-width="3"/>
        <ellipse cx="270" cy="370" rx="33" ry="33" fill="#b5d92a" stroke="#1c2a05" stroke-width="2.500"/>
        <ellipse cx="268" cy="372" rx="13" ry="14" fill="#cfe64a" stroke="#1c2a05" stroke-width="2"/>
        <ellipse cx="346" cy="503" rx="38" ry="45" transform="rotate(25 346 503)" fill="#4b4b4b" stroke="#1a1a1a" stroke-width="2"/>
        <ellipse cx="346" cy="505" rx="14" ry="12" fill="#333"/>
        <path d="M270 372 378 440" stroke="#f5f1d6" stroke-width="4"/>
        <path d="M367 458C372 440 385 432 396 433L410 445 437 490z" fill="#efeacb" stroke="#c7c3a2"/>
        <path d="M340 505 445 580" stroke="#f39c4d" stroke-width="6"/>
        <path d="M437 590C438 575 450 563 462 564L475 574 505 620z" fill="#f4a552" stroke="#d9883a"/>
      </svg>
      <span class="triad t-g"></span><span class="triad t-b"></span><span class="triad t-r"></span>

      <div class="dialog">
        <div class="dtitle">
          <svg class="d-gear" viewBox="0 0 14 14"><circle cx="7" cy="7" r="4" fill="none" stroke="#fff" stroke-width="2.200"/><circle cx="7" cy="7" r="6" fill="none" stroke="#fff" stroke-dasharray="2 1.140" stroke-width="2"/></svg>
          <span class="d-name">速度控制</span>
          <svg class="d-btn" viewBox="0 0 14 14"><path d="M4 2.500a5 5 0 1 1-2.500 4.500" fill="none" stroke="#fff" stroke-width="1.800"/><path d="M1 1l5 0-1 4z" fill="#fff"/></svg>
          <span class="d-q">?</span>
          <svg class="d-btn" viewBox="0 0 12 12"><path d="M1 1l10 10M11 1 1 11" stroke="#fff" stroke-width="1.800"/></svg>
        </div>
        <div class="dbody">
          <div class="sect s1">
            <div class="shead"><i class="scar"></i><span>机电对象</span></div>
            <div class="selrow">
              <div class="selstrip"><svg class="selchk" viewBox="0 0 16 14"><path d="M1 8l5 5L15 1" fill="none" stroke="#1fc93e" stroke-width="1.600"/></svg><span class="seltxt">选择对象 (1)</span></div>
              <div class="selcross"><svg viewBox="0 0 22 22"><circle cx="11" cy="11" r="6.500" fill="none" stroke="#222"/><path d="M11 0v22M0 11h22" stroke="#222"/></svg></div>
            </div>
          </div>
          <div class="sect s2">
            <div class="shead"><i class="scar"></i><span>约束</span></div>
            <div class="frow">
              <span>速度</span>
              <div class="numinput"><span class="val">250</span><span class="unit">°/s</span><i class="caret"></i><i class="caret blk"></i></div>
            </div>
            <label class="crow"><i class="cb"></i><span>限制加速度</span></label>
            <label class="crow"><i class="cb"></i><span>限制扭矩</span></label>
          </div>
          <div class="sect s3">
            <div class="shead"><i class="scar"></i><span>图形视图</span></div>
            <div class="graph"></div>
          </div>
          <div class="sect s4">
            <div class="shead"><i class="scar"></i><span>名称</span></div>
            <div class="nameinput">体 (1)_HJ(1)_SC(1)</div>
          </div>
          <div class="collapse"><i class="upcar"></i></div>
          <div class="btns"><span class="btn pri">确定</span><span class="btn">应用</span><span class="btn">取消</span></div>
        </div>
        <i class="redbox"></i>
      </div>
    </div>
  </section>
</main>

<div class="dropmenu">
  <div class="mi"><svg viewBox="0 0 16 16"><use href="#ctl"/><path d="M9 0l6 5" stroke="#c8101c"/></svg><span>位置控制</span></div>
  <div class="mi"><svg viewBox="0 0 16 16"><use href="#ctl"/></svg><span>速度控制</span></div>
  <div class="mi"><svg viewBox="0 0 16 16"><circle cx="3" cy="8" r="1.500" fill="#d8141c"/><path d="M9 3a5 5 0 1 0 5 8" fill="none" stroke="#2345c8" stroke-width="1.400"/><circle cx="10" cy="8" r="2.200" fill="#d8141c"/><rect x="7" y="0" width="3" height="3" fill="#d8141c"/><path d="M2 12l3-1v3z" fill="#2345c8"/></svg><span>力/扭矩控制</span></div>
  <div class="mi"><svg class="free" viewBox="0 0 16 16"><use href="#cyl" width="13" height="13"/><text class="mk" x="10" y="14.500">H</text></svg><span>液压缸</span></div>
  <div class="mi"><svg class="free" viewBox="0 0 16 16"><use href="#valve" width="14" height="14"/><text class="mk" x="10" y="14.500">H</text></svg><span>液压阀</span></div>
  <div class="mi"><svg class="free" viewBox="0 0 16 16"><use href="#cyl" width="13" height="13"/><text class="mk" x="10" y="14.500">P</text></svg><span>气缸</span></div>
  <div class="mi"><svg class="free" viewBox="0 0 16 16"><use href="#valve" width="14" height="14"/><text class="mk" x="10" y="14.500">P</text></svg><span>气动阀</span></div>
  <div class="mi"><svg viewBox="0 0 16 16"><path d="M1 13h12M11 11l2 2-2 2M14 12V1M12 3l2-2 2 2" fill="none" stroke="#333"/><path d="M0 13h3M1.500 11.500v3" stroke="#129aa6"/></svg><span>反算机构驱动</span></div>
  <div class="mi"><svg viewBox="0 0 16 16"><path d="M1 1h6l7 7-12 6" fill="none" stroke="#b4121a" stroke-width="1.200"/><path d="M1 0v16" stroke="#222"/></svg><span>姿态定义</span></div>
  <div class="mi"><svg viewBox="0 0 16 16"><path d="M2 10 12 3l3 2-10 8H2z" fill="#fff" stroke="#1c2d8a" stroke-width="1.400"/><path d="M4 6l8-5 2 2-8 5z" fill="#ec8a1a"/></svg><span>传输面</span></div>
  <i class="msep"></i>
  <div class="mi"><svg viewBox="0 0 16 16"><rect x=".5" y=".5" width="15" height="15" fill="#e5eef6" stroke="#334"/><path d="M1 12c4-1 6-3 7-6s4-3 7-4" fill="none" stroke="#c81ea0"/><path d="M11 9l4 3-4 3z" fill="#a01e90"/></svg><span>导出载荷曲线</span></div>
  <div class="mi"><svg viewBox="0 0 16 16"><rect x=".5" y=".5" width="15" height="15" fill="#e5eef6" stroke="#334"/><path d="M1 13c4-1 6-4 8-6s3-3 6-3" fill="none" stroke="#12a8a0"/><path d="M1 0h3v5H1z" fill="#1687b8"/></svg><span>导入选定的电动机</span></div>
  <div class="mi"><svg class="free" viewBox="0 0 16 16"><text class="simit" x="0" y="5">SIMIT</text><path d="M11 6l5 4-5 5z" fill="#a01e90"/></svg><span>将传感器和执行器导出至 SIMIT</span></div>
</div>

<svg class="arrows" viewBox="0 0 1245 886" aria-hidden="true">
  <path d="M817 207 891 180 889 172 908 175 897 190 894 184 817 208z"/>
  <path d="M349 294 208 372 205 366 192 384 211 383 209 377 349 295z"/>
  <path d="M243 388 845 522 846 518 860 530 842 534 844 529 243 389z"/>
</svg>
</body>
</html>
```

FILE: styles.css
```css
* { box-sizing: border-box; }
html, body { margin: 0; height: 100%; overflow: hidden; }
body {
  position: relative;
  display: flex;
  flex-direction: column;
  height: 886px;
  background: #fff;
  color: #222;
  font: 12px/1.2 "Noto Sans", "Noto Sans CJK SC", sans-serif;
}
i { display: block; font-style: normal; }
svg { display: block; flex: none; }
.defs { position: absolute; }

.caret { width: 0; height: 0; border: 3px solid transparent; border-top: 4px solid #222; border-bottom: 0; flex: none; }
.caret.wh { border-top-color: #fff; }
.caret.blk { border-width: 5px 5px 0; border-top-color: #222; }

/* title bar */
.titlebar { height: 56px; background: #046b94; color: #fff; flex: none; }
.qat { height: 28px; display: flex; align-items: center; padding-left: 4px; }
.logo { font: 700 21px/28px "Open Sans", sans-serif; width: 37px; letter-spacing: 1.500px; }
.qsep { width: 1px; height: 19px; background: #4b8eab; margin: 0 6px; flex: none; }
.qsep.first { margin: 0 9px 0 0; }
.qsep.s1l { margin-left: 7px; }
.qi { width: 16px; height: 16px; }
.ml2 { margin-left: 2px; }
.ml5 { margin-left: 5px; }
.ml7 { margin-left: 7px; }
.ml8 { margin-left: 8px; }
.ml12 { margin-left: 12px; }
.mr1 { margin-right: 1px; }
.qend { width: 8px; height: 6px; margin-left: 5px; }
.wintxt { font-size: 11.500px; margin-left: 4px; }
.apptitle { position: absolute; left: 1007px; top: 5px; font-size: 12px; color: #d8e8ef; white-space: nowrap; display: flex; }
.at-a { width: 118px; word-spacing: 2px; }
.at-b { letter-spacing: .6px; }
.tabs { height: 28px; display: flex; align-items: center; gap: 32px; padding-left: 20px; padding-top: 1px; font-size: 13px; }
.tab { position: relative; white-space: nowrap; }
.tab.first { margin-right: 9px; }
.tab.active { color: #ffc94f; }
.tab.active::after { content: ""; position: absolute; left: -16px; right: -16px; top: 22px; height: 2px; background: #fbc13c; }

/* ribbon */
.ribbon { height: 93px; display: flex; border-bottom: 1px solid #ddd; flex: none; background: #fff; }
.group { display: flex; flex-direction: column; position: relative; flex: none; }
.group::after { content: ""; position: absolute; right: 0; top: 5px; bottom: 4px; width: 1px; background: #d8d8d8; }
.group.g-end::after { display: none; }
.g-sys { width: 129px; }
.g-mc { width: 121px; }
.g-sim { width: 322px; }
.g-mech { width: 257px; }
.g-elec { width: 173px; }
.g-auto { width: 222px; }
.g-end { width: 21px; }
.grow { height: 76px; display: flex; }
.glabel { height: 16px; text-align: center; font-size: 11px; line-height: 16px; padding: 1px 18px 0 0; color: #2b7ea0; position: relative; }
.gc { position: absolute; right: 8px; top: 6px; border-top-color: #333; }
.big { display: flex; flex-direction: column; align-items: center; white-space: nowrap; min-width: 0; }
.bigi { width: 34px; height: 34px; margin-top: 4px; }
.blabel { font-size: 11px; line-height: 14px; margin-top: 5px; height: 14px; }
.big .caret { margin-top: 4px; }
.big.off { color: #bbb; }
.w-need { width: 58px; }
.w-sk { width: 56px; }
.w-play { width: 56px; }
.w-stop { width: 24px; }
.smalls { display: flex; flex-direction: column; padding-top: 2px; margin-left: -3px; }
.sm { height: 23px; display: flex; align-items: center; font-size: 11px; white-space: nowrap; }
.sm svg { width: 16px; height: 16px; margin-right: 4px; }
.sm .caret { margin-left: 6px; }
.sm .caret.far { margin-left: 10px; }
.icol { display: flex; flex-direction: column; gap: 7px; padding-top: 5px; }
.icol svg { width: 16px; height: 16px; }
.c1 { margin-left: 13px; }
.c2 { margin-left: 10px; }
.mag { margin-left: 8px; width: 28px; gap: 14px; padding-top: 7px; }
.mag .lg { width: 24px; height: 24px; }
.c3 { margin-left: 8px; }
.pairs { display: flex; flex-direction: column; gap: 9px; padding-top: 8px; margin-left: 7px; width: 60px; }
.pairs.p2 { margin-left: 0; }
.pair { display: flex; align-items: center; height: 26px; font-size: 11px; }
.pair svg { width: 24px; height: 26px; margin-right: 4px; }
.cols { display: grid; }
.g-mech .cols { grid-template-columns: 68px 26px 54px 50px 58px; }
.g-elec .cols { grid-template-columns: 72px 50px 42px; }
.g-auto .cols { grid-template-columns: 66px 42px 70px 30px; }
.g-end .cols { grid-template-columns: 26px; }
.more { padding-left: 12px; }
.sensor { padding-left: 6px; }
.hot { gap: 1px; }
.hot-ic { width: 50px; height: 38px; background: #d6e8ee; margin-top: 2px; display: flex; justify-content: center; }
.hot-ic .bigi { margin-top: 2px; }
.hot-lb { width: 49px; height: 35px; background: #d6e8ee; display: flex; flex-direction: column; align-items: center; }
.hot-lb .blabel { margin-top: 2px; }
.hot-lb .caret { margin-top: 5px; }

/* command bar */
.toolbar { height: 28px; display: flex; align-items: center; flex: none; border-bottom: 1px solid #aaa; padding: 1px 0 0 13px; }
.menuic { width: 11px; height: 10px; }
.menulb { font-size: 11px; margin-left: 6px; white-space: nowrap; }
.tcar { margin-left: 6px; }
.tsep { width: 1px; height: 20px; background: #ddd; margin: 0 12px 0 7px; flex: none; }
.combo { height: 21px; border: 1px solid #777; display: flex; align-items: center; justify-content: space-between; padding: 0 3px 0 2px; font-size: 11px; flex: none; }
.c-a { width: 148px; }
.c-b { width: 156px; padding-right: 4px; }
.ti { width: 16px; height: 16px; }
.fl { margin: 0 10px; }
.t1 { margin-left: 8px; }
.tc1 { margin-left: 4px; }
.t2 { margin-left: 11px; }
.t3a { margin-left: 8px; }
.t3b { margin-left: 10px; }
.tc2 { margin-left: 8px; }
.t4 { margin-left: 11px; }
.t5 { margin-left: 9px; }
.tsep.last { margin-left: 10px; }

/* main */
.main { flex: 1; min-height: 0; display: flex; }
.side { width: 32px; background: #dcdcdc; border-right: 1px solid #a8a8a8; display: flex; flex-direction: column; flex: none; }
.si { height: 42px; display: flex; align-items: center; justify-content: center; flex: none; }
.si svg { width: 24px; height: 24px; }
.si.gear { height: 26px; margin-bottom: 15px; }
.si.gear svg { width: 14px; height: 14px; }
.si.on { background: #fff; height: 44px; margin-left: 2px; width: 30px; border: 1px solid #ccc; border-right: 0; }
.si.g14 { margin-top: 14px; }
.si.g11 { margin-top: 11px; }
.si.g1 { margin-top: 1px; }
.p12 { font: 8.500px "Liberation Sans", sans-serif; fill: #222; }

/* navigator */
.nav { width: 305px; flex: none; padding-left: 6px; border-right: 1px solid #ccc; overflow: hidden; }
.navhead { height: 29px; display: flex; align-items: center; justify-content: space-between; padding: 0 6px 0 4px; font-size: 12px; }
.maxbox { width: 12px; height: 11px; border: 1px solid #222; border-top-width: 2px; margin-top: -1px; }
.table { width: 288px; border: 1px solid #ddd; border-width: 1px 1px 0 2px; }
.thead { display: flex; height: 22px; background: #eee; border-bottom: 1px solid #ccc; align-items: center; padding-top: 1px; }
.thead .c-name { padding-left: 6px; height: 100%; line-height: 20px; }
.thead .c-vis { padding-left: 6px; height: 100%; line-height: 20px; border-left: 1px solid #ccc; }
.thead .c-end { height: 100%; border-left: 1px solid #ccc; }
.c-name { width: 239px; flex: none; }
.c-vis { width: 40px; flex: none; display: flex; align-items: center; padding-left: 4px; }
.thead .c-vis { display: block; }
.c-end { width: 6px; flex: none; display: flex; align-items: center; justify-content: flex-end; }
.tr { display: flex; height: 20px; border-bottom: 1px solid #ececec; }
.tr:nth-child(odd) { background: #fafafa; }
.tr .c-vis, .tr .c-end { border-left: 1px solid #ececec; }
.tr .c-name { position: relative; display: flex; align-items: center; white-space: nowrap; padding-top: 1px; }
.l1 { padding-left: 19px; }
.l2 { padding-left: 39px; letter-spacing: .25px; }
.vl { position: absolute; top: 0; height: 20px; border-left: 1px dotted #777; }
.v1 { left: 9px; }
.v2 { left: 28px; }
.half-d { top: 10px; height: 10px; }
.half-u { height: 10px; }
.hl { position: absolute; left: 28px; top: 10px; width: 10px; border-top: 1px dotted #777; }
.hl0 { position: absolute; left: 9px; top: 10px; width: 10px; border-top: 1px dotted #777; }
.exp { position: absolute; left: 6px; top: 6px; width: 8px; height: 8px; background: #fff linear-gradient(#333, #333) center / 6px 1px no-repeat; border: 1px solid #bbb; }
.fold { width: 16px; height: 14px; margin-right: 4px; }
.chk { width: 14px; height: 14px; margin-right: 2px; }
.obj { width: 15px; height: 16px; margin-right: 3px; }
.eye { width: 15px; height: 10px; }
.pink { color: #f4607a; }
.tick { width: 1px; height: 10px; background: #fbc98c; }
.dot { width: 2px; height: 2px; background: #d9742a; }
.sel .c-vis, .sel .c-end { background: #cde4ea; }
.sel .hlite { flex: 1; align-self: stretch; background: #cde4ea; line-height: 19px; margin-left: -3px; padding-left: 3px; }

/* work area */
.work { flex: 1; min-width: 0; display: flex; flex-direction: column; }
.doctabs { height: 25px; flex: none; }
.doctab { width: 108px; height: 25px; background: #00628a; color: #fff; display: flex; align-items: center; padding-left: 8px; font-size: 12px; }
.dt-ic { width: 14px; height: 14px; margin-right: 4px; }
.dt-x { width: 10px; height: 10px; margin-left: 6px; }
.canvas { flex: 1; position: relative; border-top: 2px solid #00628a; min-height: 0; }
.model { position: absolute; left: 403px; top: 135px; width: 340px; height: 230px; overflow: hidden; }
.triad { position: absolute; top: 679px; width: 4px; height: 3px; }
.t-g { left: 56px; background: #4db86a; }
.t-b { left: 103px; background: #1c3ab0; }
.t-r { left: 172px; background: #d8141c; }

.dialog { position: relative; width: 328px; background: #eee; margin-top: -2px; border-right: 1px solid #bbb; border-left: 1px solid #bbb; border-bottom: 1px solid #bbb; }
.dtitle { height: 25px; background: #00628a; color: #e9f2f5; display: flex; align-items: center; padding: 0 9px 0 7px; }
.d-gear { width: 14px; height: 14px; margin-right: 7px; }
.d-name { font-size: 13.500px; flex: 1; }
.d-btn { width: 13px; height: 13px; }
.d-q { font: 700 16px/1 "Open Sans", sans-serif; color: #fff; margin: 0 12px 0 9px; }
.dbody { padding: 4px 5px 10px; }
.sect { background: #fff; border-bottom: 1px solid #ccc; padding: 0 9px; }
.s1 { height: 70px; }
.s2 { height: 110px; margin-top: 4px; }
.s3 { height: 337px; margin-top: 3px; }
.s4 { height: 62px; margin-top: 5px; }
.shead { height: 26px; display: flex; align-items: center; gap: 8px; font-size: 14px; padding-top: 1px; color: #2a7a98; }
.shead span { padding-top: 2px; }
.scar { width: 0; height: 0; border: 4px solid transparent; border-top: 5px solid #0a6a90; border-bottom: 0; margin-left: -1px; }
.selrow { display: flex; gap: 2px; margin-top: 4px; height: 32px; }
.selstrip { width: 264px; background: #fddf75; display: flex; align-items: center; gap: 4px; padding-left: 1px; font-size: 12px; }
.seltxt { padding-top: 2px; }
.selchk { width: 15px; height: 14px; }
.selcross { width: 32px; background: #fddf75; display: flex; align-items: center; justify-content: center; }
.selcross svg { width: 22px; height: 22px; }
.frow { display: flex; justify-content: space-between; align-items: center; margin-top: 4px; height: 25px; }
.numinput { width: 160px; height: 25px; border: 1px solid #777; display: flex; align-items: center; padding: 0 4px; }
.val { width: 80px; flex: none; }
.unit { width: 49px; flex: none; }
.numinput .caret { margin-right: 5px; }
.crow { display: flex; align-items: center; gap: 5px; height: 23px; }
.crow:first-of-type { margin-top: 1px; }
.crow span { padding-top: 3px; }
.cb { width: 13px; height: 13px; border: 1px solid #555; background: #fff; }
.graph { margin-top: 4px; width: 298px; height: 300px; border: 1px solid #555; box-shadow: inset 0 0 0 1px #fff, inset 0 0 0 2px #ccc; }
.nameinput { margin-top: 4px; width: 298px; height: 23px; border: 1px solid #777; padding-left: 5px; line-height: 23px; }
.collapse { height: 17px; border-bottom: 1px solid #ccc; display: flex; align-items: center; justify-content: center; padding-top: 2px; }
.upcar { width: 0; height: 0; border: 5px solid transparent; border-bottom: 5px solid #111; border-top: 0; }
.btns { display: flex; justify-content: flex-end; gap: 5px; padding: 8px 9px 0 0; }
.btn { width: 54px; height: 25px; border: 1px solid #00628a; color: #00628a; text-align: center; line-height: 24px; font-size: 12px; background: #f3f3f3; box-shadow: inset 0 0 0 .5px #00628a; }
.btn.pri { background: #00628a; color: #fff; }
.redbox { position: absolute; left: 138px; top: 123px; width: 67px; height: 41px; border: 3px solid #f13c3c; }

/* dropdown */
.dropmenu { position: absolute; left: 901px; top: 132px; width: 207px; height: 328px; background: #fff; border: 1px solid #aaa; box-shadow: 2px 2px 3px rgba(0,0,0,.4); padding-top: 3px; font-size: 11px; }
.mi { height: 24px; display: flex; align-items: center; padding-left: 6px; white-space: nowrap; }
.mi svg { width: 16px; height: 16px; margin-right: 6px; }
.mi svg.free { overflow: visible; }
.msep { height: 1px; background: #ddd; margin: 4px 12px 3px; }
.mk { font: 700 7.500px "Liberation Sans", sans-serif; fill: #e8131c; }
.simit { font: 700 5px "Liberation Sans", sans-serif; fill: #1c1c6a; }

/* annotation arrows */
.arrows { position: absolute; left: 0; top: 0; width: 1245px; height: 886px; pointer-events: none; }
.arrows path { fill: #3d62d9; }
```
